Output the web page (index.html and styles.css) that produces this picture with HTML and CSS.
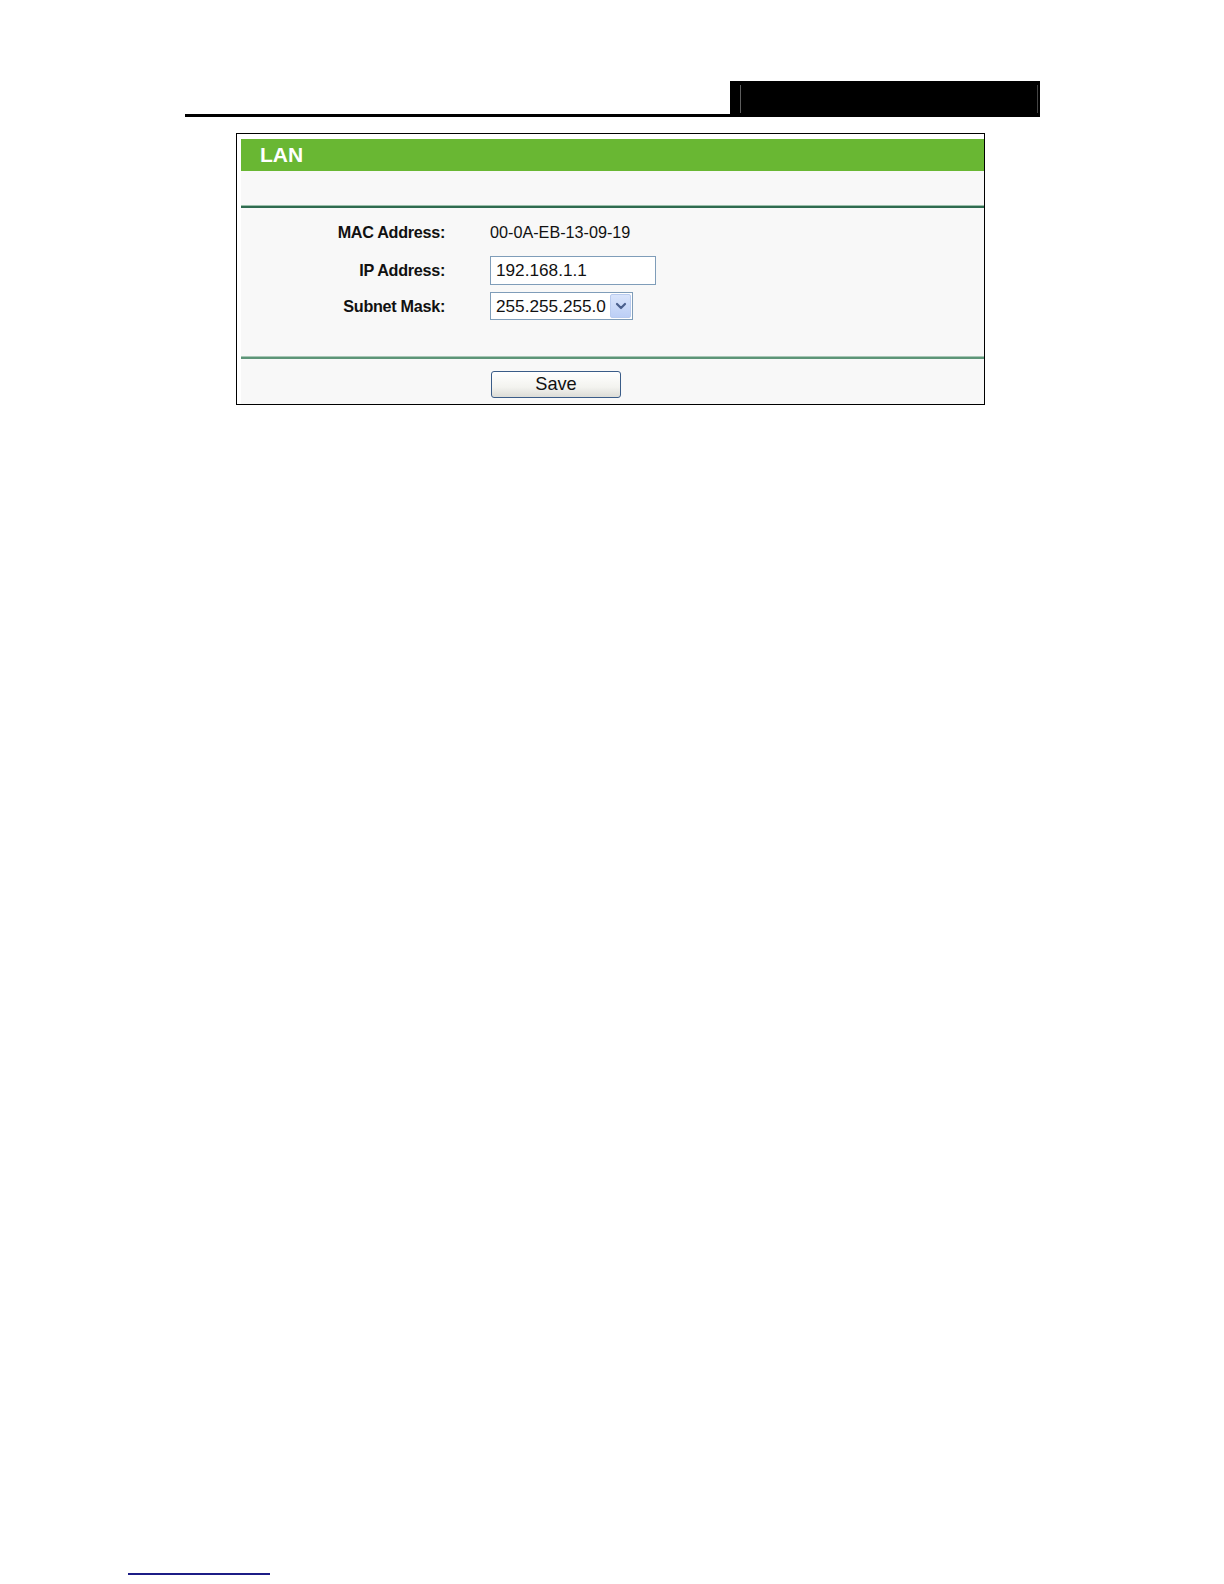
FILE: index.html
```html
<!DOCTYPE html>
<html>
<head>
<meta charset="utf-8">
<title>LAN</title>
<link rel="stylesheet" href="styles.css">
</head>
<body>
<div class="page-head">
  <div class="head-rule"></div>
  <div class="head-box"><div class="head-box-inner"></div></div>
</div>

<div class="panel">
  <div class="panel-inner">
    <div class="title-bar">LAN</div>
    <div class="spacer"></div>
    <div class="rule rule-dark"></div>
    <div class="form">
      <div class="row row-mac">
        <div class="label">MAC Address:</div>
        <div class="value">00-0A-EB-13-09-19</div>
      </div>
      <div class="row row-ip">
        <div class="label">IP Address:</div>
        <div class="value"><div class="textbox">192.168.1.1</div></div>
      </div>
      <div class="row row-mask">
        <div class="label">Subnet Mask:</div>
        <div class="value">
          <div class="selectbox">
            <span class="select-text">255.255.255.0</span>
            <span class="select-arrow">
              <svg width="12" height="8" viewBox="0 0 12 8"><path d="M2 2 L6 6 L10 2" fill="none" stroke="#4a5f8c" stroke-width="2.2" stroke-linecap="round" stroke-linejoin="round"/></svg>
            </span>
          </div>
        </div>
      </div>
    </div>
    <div class="rule rule-light"></div>
    <div class="actions">
      <button class="btn">Save</button>
    </div>
  </div>
</div>

<div class="foot-link"></div>
</body>
</html>
```
FILE: styles.css
```css
html, body {
  margin: 0;
  padding: 0;
  background: #ffffff;
}
body {
  font-family: "Liberation Sans", Arial, sans-serif;
  color: #000;
}

.page-head {
  margin-left: 185px;
  width: 855px;
  padding-top: 81px;
  display: flex;
  align-items: flex-end;
}
.head-rule {
  flex: 1;
  height: 3px;
  background: #000;
}
.head-box {
  width: 310px;
  height: 36px;
  background: #000;
  box-sizing: border-box;
  padding: 4px 2px 4px 10px;
}
.head-box-inner {
  height: 100%;
  border-left: 1px solid #5e5e5e;
  border-right: 1px solid #444;
}

.panel {
  margin-top: 16px;
  margin-left: 236px;
  width: 749px;
  height: 272px;
  box-sizing: border-box;
  border: 1px solid #000;
  padding: 5px 0 0 4px;
  background: #fff;
}
.panel-inner {
  height: 100%;
  background: #f8f8f8;
}
.title-bar {
  height: 32px;
  line-height: 32px;
  background: #69b733;
  color: #fff;
  font-weight: bold;
  font-size: 21px;
  padding-left: 19px;
}
.spacer {
  height: 34px;
}
.rule {
  height: 2px;
}
.rule-dark {
  background: #2f6b50;
  border-top: 1px solid #9cc0ab;
}
.rule-light {
  background: #5d9578;
  border-top: 1px solid #a8c8b6;
}

.form {
  padding: 9px 0 36px 0;
}
.row {
  display: grid;
  grid-template-columns: 204px 1fr;
  column-gap: 45px;
  align-items: center;
}
.row-mac { height: 30px; }
.row-ip { height: 30px; margin-top: 8px; }
.row-mask { height: 28px; margin-top: 7px; }

.label {
  text-align: right;
  font-weight: bold;
  font-size: 16.2px;
  letter-spacing: -0.3px;
  color: #111;
}
.value {
  font-size: 16.2px;
  color: #111;
}

.textbox {
  width: 166px;
  height: 29px;
  box-sizing: border-box;
  border: 1px solid #7f9db9;
  background: #fff;
  font-size: 17.2px;
  line-height: 27px;
  padding-left: 5px;
}
.selectbox {
  width: 143px;
  height: 28px;
  box-sizing: border-box;
  border: 1px solid #7f9db9;
  background: #fff;
  display: flex;
  align-items: center;
  padding: 1px 1px 1px 5px;
}
.select-text {
  flex: 1;
  font-size: 17.2px;
}
.select-arrow {
  width: 21px;
  height: 24px;
  box-sizing: border-box;
  border: 1px solid #b9cbef;
  border-radius: 2px;
  background: linear-gradient(#d9e4fb, #bccff6);
  display: flex;
  align-items: center;
  justify-content: center;
}

.actions {
  padding: 12px 0 0 250px;
}
.btn {
  width: 130px;
  height: 27px;
  border: 1px solid #3a5c88;
  border-radius: 3px;
  background: linear-gradient(#ffffff, #f3f3ef 60%, #dcdcd6);
  font-family: "Liberation Sans", Arial, sans-serif;
  font-size: 18.2px;
  color: #111;
  padding: 0;
}

.foot-link {
  margin-top: 1168px;
  margin-left: 128px;
  width: 142px;
  height: 2px;
  background: #1c1c86;
}
```
